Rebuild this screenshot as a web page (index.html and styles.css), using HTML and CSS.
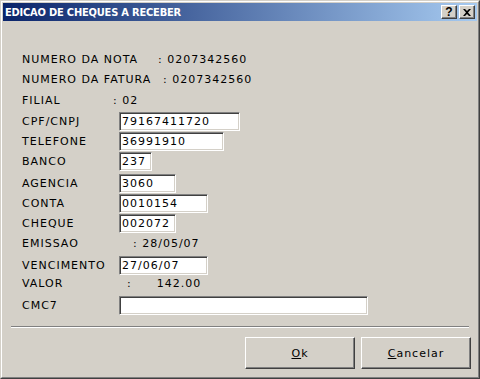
FILE: index.html
```html
<!DOCTYPE html>
<html lang="pt-BR">
<head>
    <meta charset="UTF-8">
    <title>EDICAO DE CHEQUES A RECEBER</title>
    <link rel="stylesheet" href="styles.css">
</head>
<body>
    <div class="window">
        <div class="frame">
            <div class="titlebar">
                <span class="title">EDICAO DE CHEQUES A RECEBER</span>
                <div class="title-buttons">
                    <span class="tbtn help">?</span>
                    <span class="tbtn">
                        <svg width="8" height="7" viewBox="0 0 8 7"><path d="M0 0h2l2 2 2-2h2L5 3.5 8 7H6L4 5 2 7H0l3-3.5z" fill="#000"/></svg>
                    </span>
                </div>
            </div>

            <div class="form">
                <div class="row">
                    <span class="lbl lbl-nota">NUMERO DA NOTA</span><span>: 0207342560</span>
                </div>
                <div class="row">
                    <span class="lbl lbl-fatura">NUMERO DA FATURA</span><span>: 0207342560</span>
                </div>
                <div class="row">
                    <span class="lbl lbl-filial">FILIAL</span><span>: 02</span>
                </div>
                <div class="row">
                    <span class="lbl">CPF/CNPJ</span><input class="edit w-cpf" type="text" value="79167411720">
                </div>
                <div class="row">
                    <span class="lbl">TELEFONE</span><input class="edit w-tel" type="text" value="36991910">
                </div>
                <div class="row">
                    <span class="lbl">BANCO</span><input class="edit w-banco" type="text" value="237">
                </div>
                <div class="row">
                    <span class="lbl">AGENCIA</span><input class="edit w-short" type="text" value="3060">
                </div>
                <div class="row">
                    <span class="lbl">CONTA</span><input class="edit w-mid" type="text" value="0010154">
                </div>
                <div class="row">
                    <span class="lbl">CHEQUE</span><input class="edit w-short" type="text" value="002072">
                </div>
                <div class="row">
                    <span class="lbl lbl-emissao">EMISSAO</span><span>: 28/05/07</span>
                </div>
                <div class="row">
                    <span class="lbl">VENCIMENTO</span><input class="edit w-mid" type="text" value="27/06/07">
                </div>
                <div class="row">
                    <span class="lbl lbl-valor">VALOR</span><span>:</span><span class="amount">142.00</span>
                </div>
                <div class="row">
                    <span class="lbl">CMC7</span><input class="edit w-cmc" type="text" value="">
                </div>
            </div>

            <div class="separator"></div>

            <div class="actions">
                <button class="btn"><u>O</u>k</button>
                <button class="btn"><u>C</u>ancelar</button>
            </div>
        </div>
    </div>
</body>
</html>
```

FILE: styles.css
```css
body {
    margin: 0;
    font-family: "DejaVu Sans", Verdana, sans-serif;
    font-size: 11px;
    color: #000;
}
.window {
    width: 480px;
    height: 379px;
    box-sizing: border-box;
    border: 1px solid;
    border-color: #d4d0c8 #404040 #404040 #d4d0c8;
    background-color: #d4d0c8;
}
.frame {
    height: 100%;
    box-sizing: border-box;
    border: 1px solid;
    border-color: #fff #808080 #808080 #fff;
    padding: 1px;
}
.titlebar {
    height: 18px;
    display: flex;
    align-items: center;
    justify-content: space-between;
    padding: 0 2px 0 2px;
    background: linear-gradient(to right, #0a246a, #a6caf0);
}
.title {
    color: #fff;
    font-family: "DejaVu Sans Condensed", "DejaVu Sans", sans-serif;
    font-weight: bold;
    font-size: 11px;
    letter-spacing: -0.2px;
}
.title-buttons {
    display: flex;
    gap: 2px;
}
.tbtn {
    width: 16px;
    height: 14px;
    box-sizing: border-box;
    display: flex;
    align-items: center;
    justify-content: center;
    background-color: #d4d0c8;
    border: 1px solid;
    border-color: #fff #404040 #404040 #fff;
    box-shadow: inset -1px -1px #808080;
}
.help {
    font-family: "Liberation Sans", Arial, sans-serif;
    font-weight: bold;
    font-size: 12px;
    line-height: 12px;
}
.form {
    display: grid;
    grid-template-rows: 20px 21px 21px 20px 20px 22px 20px 20px 20px 22px 18px 22px 19px;
    padding: 29px 0 0 19px;
    letter-spacing: 1px;
}
.row {
    height: 19px;
    display: flex;
    align-items: center;
    white-space: pre;
}
.lbl {
    width: 97px;
    flex-shrink: 0;
}
.lbl-nota { width: 136px; }
.lbl-fatura { width: 141px; }
.lbl-filial { width: 91px; }
.lbl-emissao { width: 111px; }
.lbl-valor { width: 105px; }
.amount {
    margin-left: 25px;
}
.edit {
    height: 19px;
    box-sizing: border-box;
    margin: 0;
    padding: 0 2px;
    font-family: inherit;
    font-size: 11px;
    letter-spacing: 1px;
    color: #000;
    background-color: #fff;
    border: 1px solid;
    border-color: #808080 #fff #fff #808080;
    box-shadow: inset 1px 1px #404040, inset -1px -1px #d4d0c8;
    outline: none;
}
.w-cpf { width: 121px; }
.w-tel { width: 105px; }
.w-banco { width: 33px; }
.w-short { width: 57px; }
.w-mid { width: 89px; }
.w-cmc { width: 249px; }
.separator {
    margin: 11px 8px 0 8px;
    height: 0;
    border-top: 1px solid #808080;
    border-bottom: 1px solid #fff;
}
.actions {
    display: flex;
    justify-content: flex-end;
    gap: 6px;
    padding: 9px 6px 0 0;
}
.btn {
    width: 110px;
    height: 32px;
    box-sizing: border-box;
    font-family: inherit;
    font-size: 11px;
    letter-spacing: 1px;
    color: #000;
    background-color: #d4d0c8;
    border: 1px solid;
    border-color: #fff #404040 #404040 #fff;
    box-shadow: inset -1px -1px #808080;
    padding: 0;
}
```
